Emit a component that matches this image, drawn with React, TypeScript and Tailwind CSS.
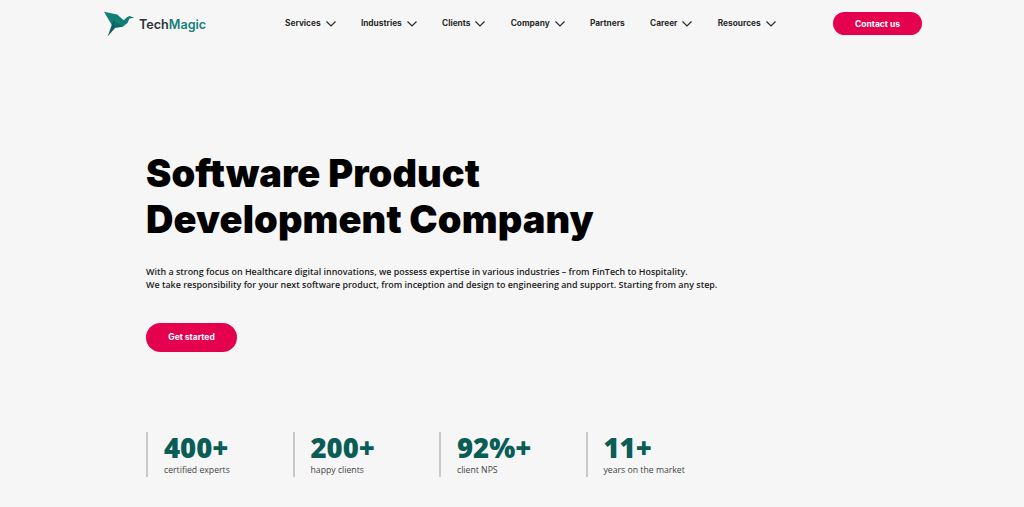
const navItems = [
  { label: "Services", chevron: true },
  { label: "Industries", chevron: true },
  { label: "Clients", chevron: true },
  { label: "Company", chevron: true },
  { label: "Partners", chevron: false },
  { label: "Career", chevron: true },
  { label: "Resources", chevron: true },
];

const stats = [
  { value: "400+", label: "certified experts" },
  { value: "200+", label: "happy clients" },
  { value: "92%+", label: "client NPS" },
  { value: "11+", label: "years on the market" },
];

function Logo() {
  return (
    <div className="flex items-center gap-[4px]">
      <svg width="31" height="26" viewBox="0 0 33 26">
        <path d="M0 0 L14 3 L21 9 L24 6 L27 4.500 L32 6 L27 7.500 L25 12 L20 16 L10 17 Z" fill="#0f7f78" />
        <path d="M10 9 L12 17 L4 26 Z" fill="#0b5f5a" />
        <path d="M10 9 L20 16 L12 17 Z" fill="#0a6e68" />
      </svg>
      <span className="mt-[3px] text-[12.6px] font-semibold leading-none font-['Inter',sans-serif]">
        <span className="text-[#2b3238]">Tech</span>
        <span className="text-[#17807c]">Magic</span>
      </span>
    </div>
  );
}

function Chevron() {
  return (
    <svg width="10" height="6" viewBox="0 0 10 6" fill="none" stroke="#2a2a2a" strokeWidth="1.2">
      <path d="M0.500 0.500 L5 5 L9.500 0.500" />
    </svg>
  );
}

export default function App() {
  return (
    <div className="h-[507px] w-[1024px] overflow-hidden bg-[#f6f6f6] font-['Open_Sans',sans-serif]">
      <header className="flex h-[47px] items-start pl-[104px] pt-[11px]">
        <div className="w-[181px]">
          <Logo />
        </div>
        <nav className="flex h-[25px] w-[548px] items-center gap-[25.300px]">
          {navItems.map((item) => (
            <a
              key={item.label}
              className="flex items-center gap-[5px] whitespace-nowrap text-[8.300px] font-bold text-[#2a2a2a] font-['Inter',sans-serif]"
            >
              {item.label}
              {item.chevron && <Chevron />}
            </a>
          ))}
        </nav>
        <a className="mt-[1px] flex h-[23px] w-[89px] items-center justify-center rounded-full bg-[#e4024f] pt-[1px] text-[8.500px] font-bold text-white font-['Inter',sans-serif]">
          Contact us
        </a>
      </header>

      <main className="pl-[146px]">
        <h1 className="mt-[103px] text-[38px] font-black leading-[46px] tracking-[0.1px] text-black font-['Inter',sans-serif]">
          Software Product
          <br />
          Development Company
        </h1>
        <p className="mt-[23px] text-[8.940px] font-semibold leading-[13px] text-[#1c1c1c]">
          With a strong focus on Healthcare digital innovations, we possess expertise in various industries – from FinTech to Hospitality.
          <br />
          We take responsibility for your next software product, from inception and design to engineering and support. Starting from any step.
        </p>
        <a className="mt-[32px] flex h-[29px] w-[91px] items-center justify-center rounded-full bg-[#e4024f] text-[8.500px] font-bold text-white font-['Inter',sans-serif]">
          Get started
        </a>
        <div className="mt-[80px] flex">
          {stats.map((stat) => (
            <div key={stat.label} className="h-[45px] w-[146.500px] border-l-2 border-[#c9c9c9] pl-[16px]">
              <div className="pt-[1px] text-[27.500px] font-extrabold leading-[30px] text-[#0a5c56]">{stat.value}</div>
              <div className="text-[8.700px] leading-[14px] text-[#444]">{stat.label}</div>
            </div>
          ))}
        </div>
      </main>
    </div>
  );
}
